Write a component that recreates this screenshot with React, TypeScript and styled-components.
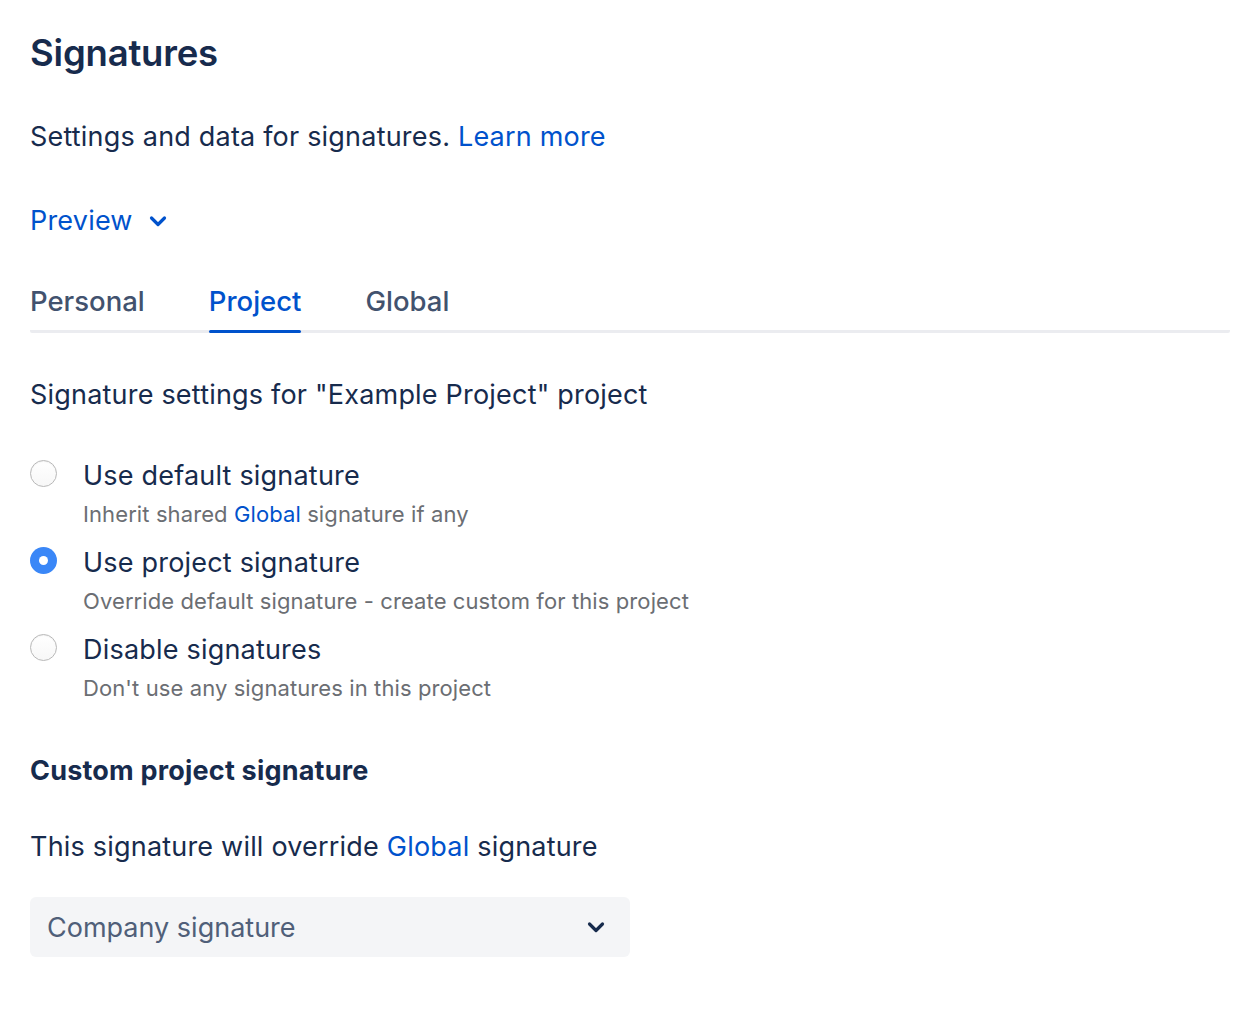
import React, { useState } from "react";
import styled, { createGlobalStyle } from "styled-components";

const Global = createGlobalStyle`
  html, body { margin: 0; padding: 0; background: #ffffff; }
  body { font-family: Inter, "Noto Sans", "Liberation Sans", sans-serif; color: #172B4D; -webkit-font-smoothing: antialiased; }
  * { box-sizing: border-box; }
`;

const Page = styled.div`
  width: 1230px;
  padding: 31px 0 40px 30px;
  display: flex;
  flex-direction: column;
`;

const Title = styled.h1`
  margin: 0;
  font-size: 36.5px;
  line-height: 44px;
  font-weight: 600;
  color: #172B4D;
  letter-spacing: -0.2px;
`;

const Text = styled.p<{ $mt: number; $bold?: boolean }>`
  margin: ${(p) => p.$mt}px 0 0;
  font-size: 27px;
  line-height: 36px;
  font-weight: ${(p) => (p.$bold ? 700 : 400)};
  letter-spacing: 0.2px;
  color: #172B4D;
`;

const Link = styled.a`
  color: #0052CC;
  text-decoration: none;
  cursor: pointer;
`;

const PreviewToggle = styled.button`
  margin: 48px 0 0;
  padding: 0;
  border: 0;
  background: none;
  display: flex;
  align-items: center;
  gap: 13px;
  align-self: flex-start;
  font-family: inherit;
  font-size: 27px;
  line-height: 36px;
  letter-spacing: 0.2px;
  color: #0052CC;
  cursor: pointer;
`;

const Tabs = styled.div`
  margin-top: 44px;
  display: flex;
  gap: 64px;
  border-bottom: 3px solid #EBECF0;
  border-radius: 2px;
`;

const Tab = styled.button<{ $active?: boolean }>`
  position: relative;
  padding: 0 0 11px;
  border: 0;
  background: none;
  font-family: inherit;
  font-size: 27.5px;
  line-height: 36px;
  font-weight: 500;
  color: ${(p) => (p.$active ? "#0052CC" : "#42526E")};
  cursor: pointer;
  &::after {
    content: "";
    position: absolute;
    left: 0;
    right: 0;
    bottom: -3px;
    height: 3px;
    border-radius: 2px;
    background: ${(p) => (p.$active ? "#0052CC" : "transparent")};
  }
`;

const RadioList = styled.div`
  margin-top: 45px;
  display: flex;
  flex-direction: column;
  gap: 16px;
`;

const RadioItem = styled.label`
  display: flex;
  align-items: flex-start;
  gap: 26px;
  cursor: pointer;
`;

const RadioCircle = styled.span<{ $checked?: boolean }>`
  flex: none;
  width: 27px;
  height: 27px;
  margin-top: 2px;
  border-radius: 50%;
  display: flex;
  align-items: center;
  justify-content: center;
  background: ${(p) => (p.$checked ? "#3A87F7" : "linear-gradient(#ffffff, #f7f7f7)")};
  border: ${(p) => (p.$checked ? "none" : "1px solid #b8b8b8")};
  box-shadow: ${(p) => (p.$checked ? "none" : "inset 0 1px 1px rgba(0,0,0,0.05)")};
  &::after {
    content: "";
    width: 9px;
    height: 9px;
    border-radius: 50%;
    background: #ffffff;
    display: ${(p) => (p.$checked ? "block" : "none")};
  }
`;

const RadioBody = styled.div`
  display: flex;
  flex-direction: column;
  gap: 5px;
`;

const RadioLabel = styled.span`
  font-size: 27px;
  line-height: 36px;
  letter-spacing: 0.2px;
  color: #172B4D;
`;

const RadioDesc = styled.span`
  font-size: 22px;
  line-height: 30px;
  color: #6B6E73;
  letter-spacing: 0.1px;
`;

const Select = styled.button`
  margin-top: 32px;
  width: 600px;
  height: 60px;
  padding: 0 22px 0 17px;
  border: 0;
  border-radius: 6px;
  background: #F4F5F7;
  display: flex;
  align-items: center;
  justify-content: space-between;
  font-family: inherit;
  font-size: 27px;
  color: #505F79;
  cursor: pointer;
`;

const Chevron = ({ color, size }: { color: string; size: number }) => (
  <svg width={size} height={size} viewBox="0 0 24 24" fill="none">
    <path d="M5.5 9 L12 15.5 L18.5 9" stroke={color} strokeWidth="3.2" strokeLinecap="round" strokeLinejoin="round" />
  </svg>
);

const options = [
  { id: "default", label: "Use default signature", desc: <>Inherit shared <Link>Global</Link> signature if any</> },
  { id: "project", label: "Use project signature", desc: <>Override default signature - create custom for this project</> },
  { id: "disable", label: "Disable signatures", desc: <>Don't use any signatures in this project</> },
];

export default function App() {
  const [tab, setTab] = useState("Project");
  const [choice, setChoice] = useState("project");
  return (
    <>
      <Global />
      <Page>
        <Title>Signatures</Title>
        <Text $mt={44}>
          Settings and data for signatures. <Link>Learn more</Link>
        </Text>
        <PreviewToggle>
          Preview <Chevron color="#0052CC" size={24} />
        </PreviewToggle>
        <Tabs>
          {["Personal", "Project", "Global"].map((t) => (
            <Tab key={t} $active={tab === t} onClick={() => setTab(t)}>
              {t}
            </Tab>
          ))}
        </Tabs>
        <Text $mt={44}>Signature settings for "Example Project" project</Text>
        <RadioList>
          {options.map((o) => (
            <RadioItem key={o.id} onClick={() => setChoice(o.id)}>
              <RadioCircle $checked={choice === o.id} />
              <RadioBody>
                <RadioLabel>{o.label}</RadioLabel>
                <RadioDesc>{o.desc}</RadioDesc>
              </RadioBody>
            </RadioItem>
          ))}
        </RadioList>
        <Text $mt={50} $bold>Custom project signature</Text>
        <Text $mt={40}>
          This signature will override <Link>Global</Link> signature
        </Text>
        <Select>
          Company signature
          <Chevron color="#172B4D" size={24} />
        </Select>
      </Page>
    </>
  );
}
